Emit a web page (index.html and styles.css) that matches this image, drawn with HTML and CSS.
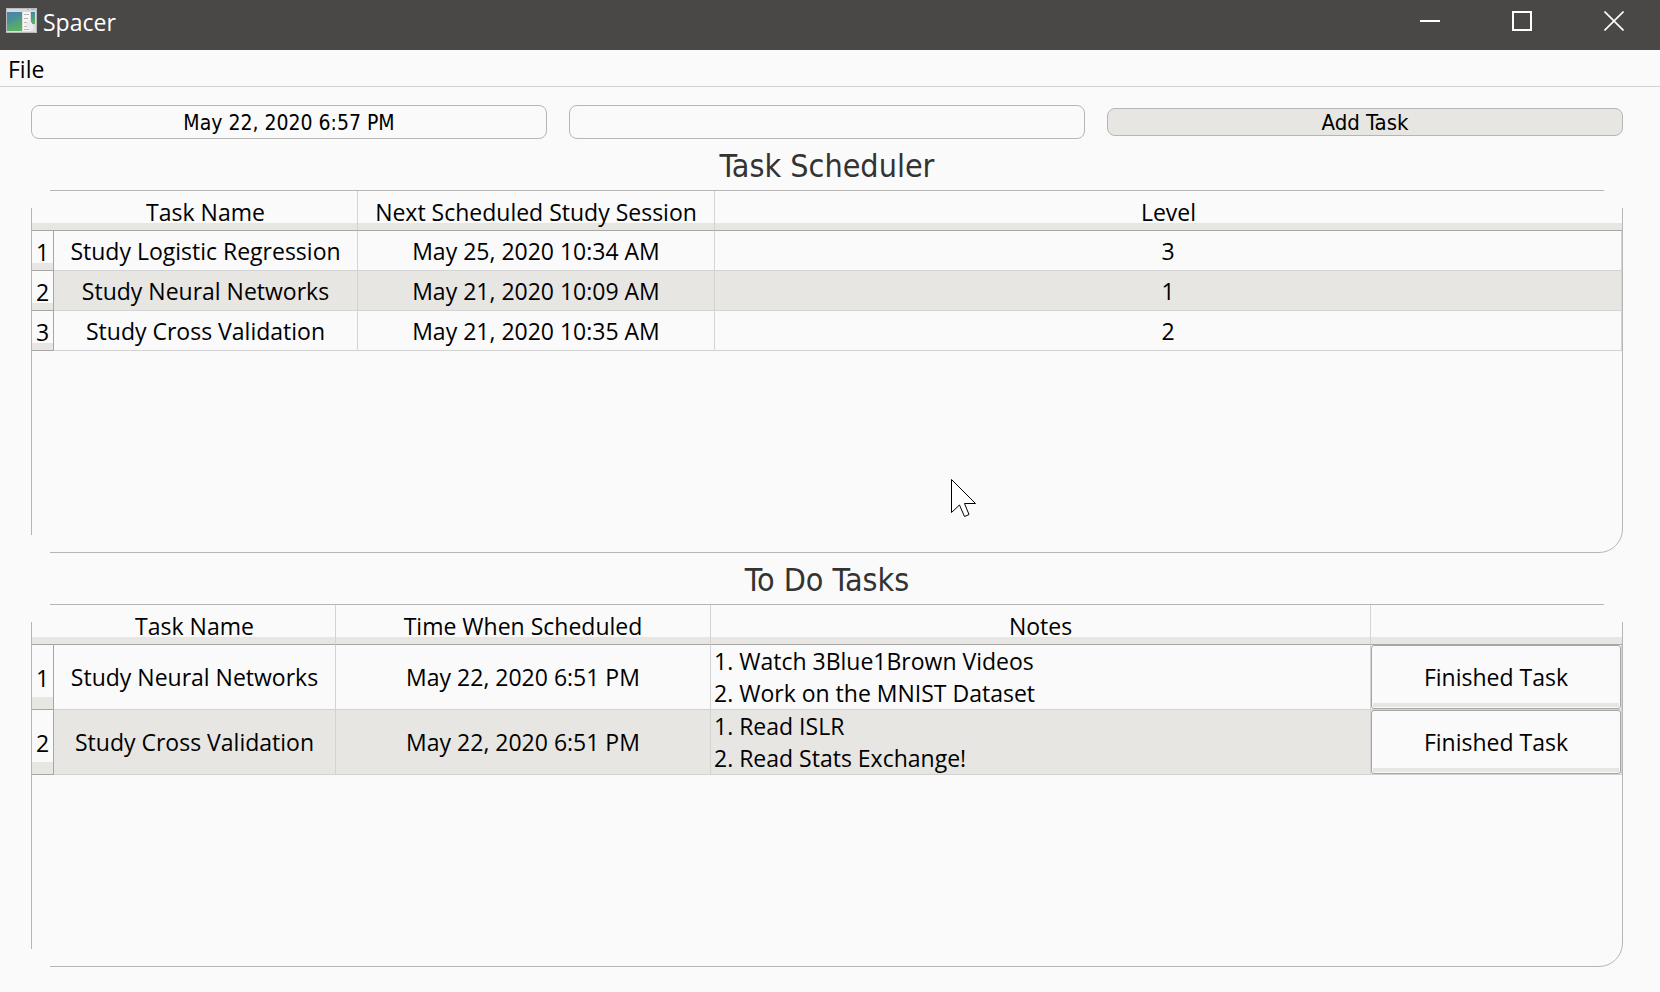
FILE: index.html
```html
<!DOCTYPE html>
<html lang="en">
<head>
<meta charset="utf-8">
<title>Spacer</title>
<link rel="stylesheet" href="styles.css">
</head>
<body>
<div class="window">
  <header class="titlebar">
    <svg class="app-icon" width="31" height="26" viewBox="0 0 31 26" aria-hidden="true">
      <defs><linearGradient id="leaf" x1="0" y1="0" x2="0.3" y2="1"><stop offset="0" stop-color="#4a7fa8"/><stop offset="0.5" stop-color="#4a9a88"/><stop offset="1" stop-color="#5cae68"/></linearGradient></defs>
      <rect x="0.5" y="0.5" width="30" height="24" fill="#dcdcdc" stroke="#b9bcbe"/>
      <rect x="1" y="1" width="29" height="3" fill="#d5d8dc"/>
      <path d="M21 1.5h2M25 1.5h4" stroke="#aeb4ba"/>
      <rect x="1" y="4" width="15" height="19" fill="url(#leaf)"/>
      <path d="M1 15Q8 13 16 6V4H1z" fill="#4b86ab" opacity=".5"/>
      <rect x="17" y="4" width="7" height="19" fill="#f6f6f6"/>
      <path d="M18 6.500h5M18 10.500h4M18 14.500h3M18 18.500h5M18 21.500h5" stroke="#b5b5b5"/>
      <rect x="25" y="4" width="4" height="12" fill="url(#leaf)"/>
      <path d="M19 16l5-4 3 5 1 4-4 2z" fill="#ececec"/>
    </svg>
    <h1 class="app-name">Spacer</h1>
    <div class="window-controls">
      <button class="control" aria-label="Minimize"><svg width="20" height="20" viewBox="0 0 20 20"><path d="M0 10h20" stroke="#fff" stroke-width="2"/></svg></button>
      <button class="control" aria-label="Maximize"><svg width="20" height="20" viewBox="0 0 20 20"><path d="M1 1h18v18H1z" fill="none" stroke="#fff" stroke-width="2"/></svg></button>
      <button class="control" aria-label="Close"><svg width="20" height="20" viewBox="0 0 20 20"><path d="M.5.5l19 19M19.500.5l-19 19" stroke="#fff" stroke-width="1.6"/></svg></button>
    </div>
  </header>
  <nav class="menubar"><button class="menu-item">File</button></nav>
  <main class="content">
    <form class="task-form">
      <input class="field" type="text" aria-label="Date and time" value="May 22, 2020 6:57 PM">
      <input class="field" type="text" aria-label="Task name">
      <button class="add-button" type="button">Add Task</button>
    </form>
    <h2 class="section-title">Task Scheduler</h2>
    <section class="frame">
      <table class="grid">
        <colgroup><col class="col-index"><col class="col-name"><col class="col-session"><col></colgroup>
        <thead><tr><td class="corner"></td><th scope="col">Task Name</th><th scope="col">Next Scheduled Study Session</th><th scope="col">Level</th></tr></thead>
        <tbody>
          <tr><th scope="row">1</th><td>Study Logistic Regression</td><td>May 25, 2020 10:34 AM</td><td>3</td></tr>
          <tr><th scope="row">2</th><td>Study Neural Networks</td><td>May 21, 2020 10:09 AM</td><td>1</td></tr>
          <tr><th scope="row">3</th><td>Study Cross Validation</td><td>May 21, 2020 10:35 AM</td><td>2</td></tr>
        </tbody>
      </table>
      <span class="notch notch-tl"></span><span class="notch notch-tr"></span><span class="notch notch-bl"></span>
    </section>
    <h2 class="section-title">To Do Tasks</h2>
    <section class="frame">
      <table class="grid">
        <colgroup><col class="col-index"><col class="col-todo"><col class="col-time"><col><col class="col-action"></colgroup>
        <thead><tr><td class="corner"></td><th scope="col">Task Name</th><th scope="col">Time When Scheduled</th><th scope="col">Notes</th><th scope="col" aria-label="Action"></th></tr></thead>
        <tbody>
          <tr><th scope="row">1</th><td>Study Neural Networks</td><td>May 22, 2020 6:51 PM</td><td class="notes">1. Watch 3Blue1Brown Videos<br>2. Work on the MNIST Dataset</td><td class="action"><button class="finish-button">Finished Task</button></td></tr>
          <tr><th scope="row">2</th><td>Study Cross Validation</td><td>May 22, 2020 6:51 PM</td><td class="notes">1. Read ISLR<br>2. Read Stats Exchange!</td><td class="action"><button class="finish-button">Finished Task</button></td></tr>
        </tbody>
      </table>
      <span class="notch notch-tl"></span><span class="notch notch-tr"></span><span class="notch notch-bl"></span>
    </section>
  </main>
  <svg class="pointer" width="26" height="39" viewBox="0 0 26 39" aria-hidden="true"><path d="M.5.5v33l8-7.500 5 11.500 4.500-2-4.500-11h11z" fill="#fff" stroke="#000"/></svg>
</div>
</body>
</html>
```
FILE: styles.css
```css
* { box-sizing: border-box; }
body {
  margin: 0;
  background: #fafafa;
  color: #000;
  font: 23px/32px "Open Sans", "Noto Sans", sans-serif;
}
button, input { font: inherit; color: inherit; }
.window {
  position: relative;
  display: flex;
  flex-direction: column;
  min-height: 100vh;
}
.titlebar {
  display: flex;
  height: 50px;
  background: #4a4846;
  color: #fff;
}
.app-icon { margin: 8px 6px 0 6px; }
.app-name { margin: 6px 0 0; font-size: 23px; font-weight: 400; }
.window-controls { display: flex; height: 42px; margin-left: auto; }
.control {
  display: flex;
  align-items: center;
  justify-content: center;
  width: 92px;
  padding: 0;
  border: 0;
  background: none;
}
.menubar { height: 37px; border-bottom: 1px solid #d3d3d3; }
.menu-item {
  height: 36px;
  padding: 2px 8px 0;
  border: 0;
  background: none;
}
.content {
  flex: 1;
  display: flex;
  flex-direction: column;
  padding: 18px 37px 25px 31px;
}
.task-form {
  display: grid;
  grid-template-columns: repeat(3, 1fr);
  gap: 22px;
  align-items: center;
  font: 21px/24px "DejaVu Sans Condensed", "Noto Sans", sans-serif;
}
.field, .add-button {
  min-width: 0;
  border: 1px solid #b6b6b6;
  border-radius: 8px;
  text-align: center;
}
.field { height: 34px; padding: 2px 8px 0; background: #fafafa; }
.add-button { height: 28px; padding: 1px 0 0; background: #e7e6e2; font-size: 22px; }
.section-title {
  margin: 0;
  height: 51px;
  padding-top: 2px;
  color: #333;
  font: 32px/50px "DejaVu Sans Condensed", "Noto Sans", sans-serif;
  text-align: center;
}
.frame {
  position: relative;
  flex: 1 0 0;
  border: 1px solid #b6b6b6;
  border-radius: 0 0 24px 0;
}
.notch { position: absolute; width: 19px; height: 18px; background: #fafafa; }
.notch-tl { top: -1px; left: -1px; }
.notch-tr { top: -1px; right: -1px; }
.notch-bl { bottom: -1px; left: -1px; }
.grid {
  width: 100%;
  table-layout: fixed;
  border-collapse: separate;
  border-spacing: 0;
}
.col-index { width: 22px; }
.col-name { width: 304px; }
.col-session { width: 357px; }
.col-todo { width: 282px; }
.col-time { width: 375px; }
.col-action { width: 251px; }
.grid th, .grid td {
  height: 40px;
  padding: 0;
  border: solid #d3d3d3;
  border-width: 0 1px 1px 0;
  font-weight: 400;
  text-align: center;
  white-space: nowrap;
}
.grid th, .grid .corner {
  background: linear-gradient(#fafafa 82%, #e7e6e2 82%);
  border-bottom-color: #a6a6a6;
}
.grid thead th { padding-top: 2px; }
.grid .corner, .grid thead th:last-child { border-right-width: 0; }
.grid tbody th { padding-top: 2px; border-right-color: #a6a6a6; }
.grid tbody tr:nth-child(even) td { background: #e7e6e2; }
.grid .notes { padding-left: 3px; text-align: left; }
.grid .action { height: 65px; }
.finish-button {
  display: block;
  width: 100%;
  height: 64px;
  padding: 0;
  border: 1px solid #a6a6a6;
  border-radius: 3px;
  background: linear-gradient(#e7e6e2, #e7e6e2) center bottom 1px / calc(100% - 2px) 4px no-repeat #fafafa;
}
.pointer { position: absolute; left: 951px; top: 479px; }
```
